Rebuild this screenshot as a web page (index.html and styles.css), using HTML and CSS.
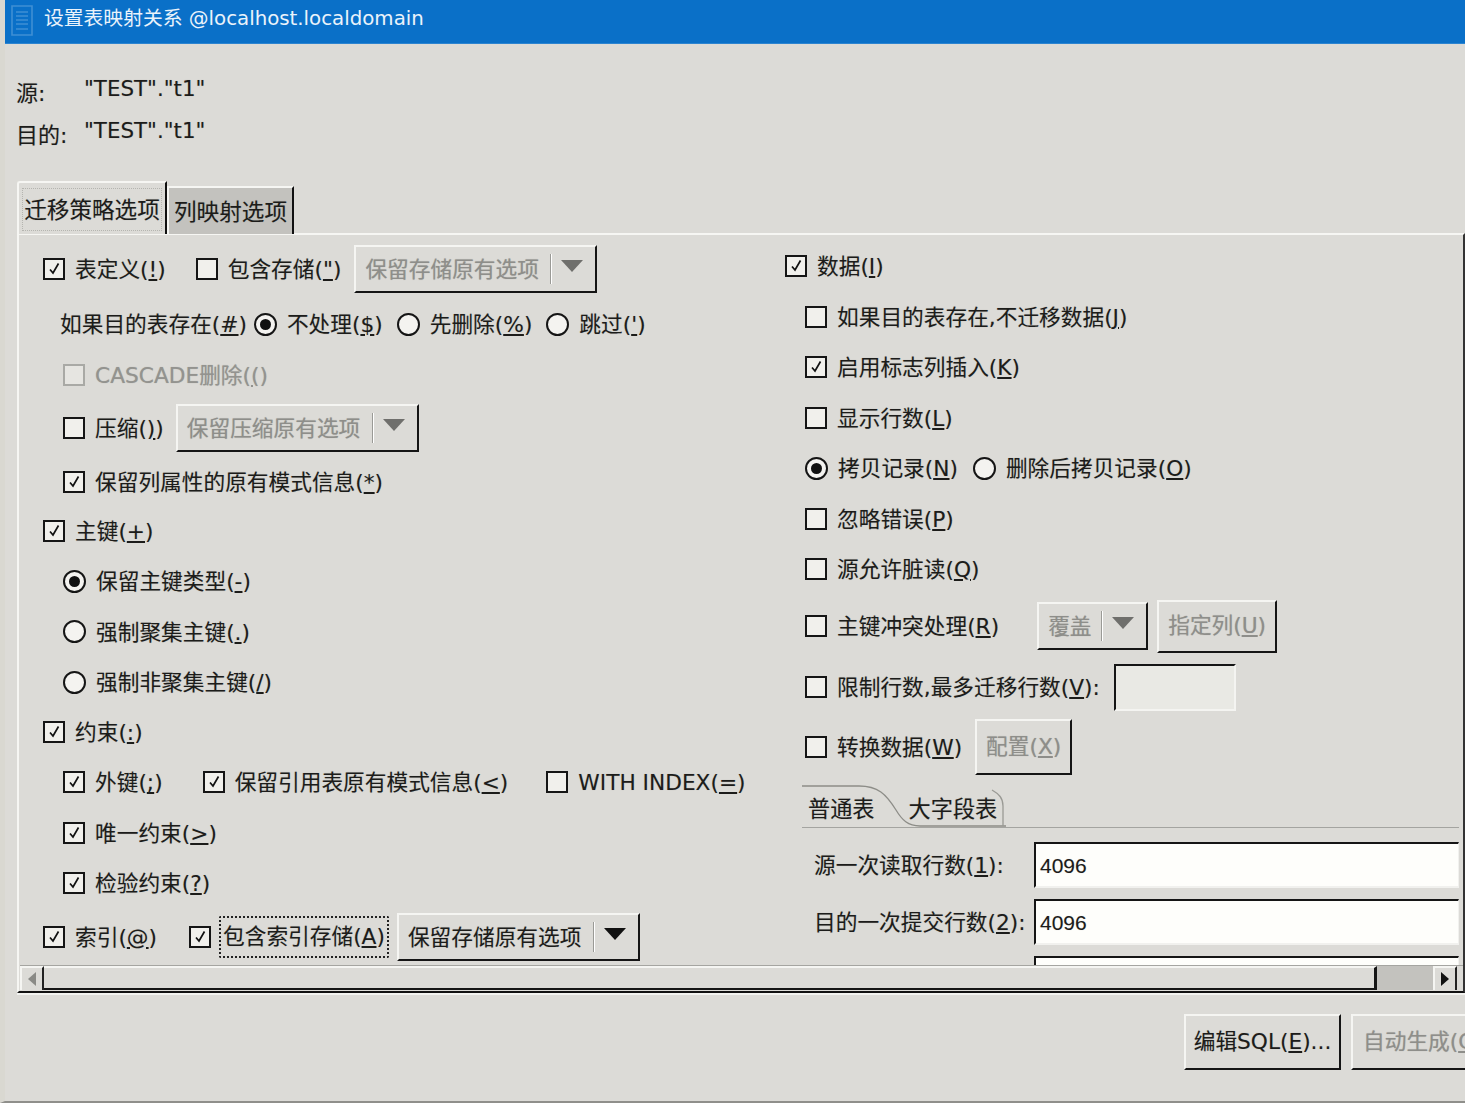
FILE: index.html
```html
<!DOCTYPE html>
<html lang="zh-CN">
<head>
<meta charset="utf-8">
<title>设置表映射关系</title>
<link rel="stylesheet" href="styles.css">
</head>
<body>
<svg class="defs" width="0" height="0" aria-hidden="true"><defs>
<symbol id="tick" viewBox="0 0 18 18"><path d="M5 9.5 L8 13 L13.5 3.5" fill="none" stroke="#111" stroke-width="1.7"/></symbol>
</defs></svg>
<div class="window">
  <header class="titlebar">
    <svg class="appicon" width="26" height="32" viewBox="0 0 26 32"><path d="M3 1H23V30H3Z M7 7H19 M7 11H19 M7 15H19 M7 19H19 M7 24H19" fill="none" stroke="#3f8fd4" stroke-width="1.6"/></svg>
    <span class="title">设置表映射关系 @localhost.localdomain</span>
  </header>
  <section class="info">
    <span class="info-label">源:</span><span class="info-value">"TEST"."t1"</span>
    <span class="info-label">目的:</span><span class="info-value">"TEST"."t1"</span>
  </section>
  <nav class="tabs">
    <div class="tab active"><span class="tab-focus">迁移策略选项</span></div>
    <div class="tab inactive">列映射选项</div>
  </nav>
  <main class="panel">
    <div class="columns">
      <div class="col left">
        <div class="row tall r1">
          <label class="opt"><i class="box on"><svg><use href="#tick"/></svg></i><span>表定义(<u>!</u>)</span></label>
          <label class="opt m30"><i class="box"></i><span>包含存储(<u>"</u>)</span></label>
          <div class="combo off m13 w242"><span class="combo-text">保留存储原有选项</span><i class="combo-sep"></i><i class="arrow"></i></div>
        </div>
        <div class="row ind-s g16">
          <span class="text">如果目的表存在(<u>#</u>)</span>
          <label class="opt"><i class="radio on"></i><span>不处理(<u>$</u>)</span></label>
          <label class="opt"><i class="radio"></i><span>先删除(<u>%</u>)</span></label>
          <label class="opt"><i class="radio"></i><span>跳过(<u>'</u>)</span></label>
        </div>
        <div class="row ind"><label class="opt off"><i class="box dis"></i><span>CASCADE删除(<u>(</u>)</span></label></div>
        <div class="row tall ind">
          <label class="opt"><i class="box"></i><span>压缩(<u>)</u>)</span></label>
          <div class="combo off m12 w242"><span class="combo-text">保留压缩原有选项</span><i class="combo-sep"></i><i class="arrow"></i></div>
        </div>
        <div class="row ind r5"><label class="opt"><i class="box on"><svg><use href="#tick"/></svg></i><span>保留列属性的原有模式信息(<u>*</u>)</span></label></div>
        <div class="row"><label class="opt"><i class="box on"><svg><use href="#tick"/></svg></i><span>主键(<u>+</u>)</span></label></div>
        <div class="row ind"><label class="opt"><i class="radio on"></i><span>保留主键类型(<u>-</u>)</span></label></div>
        <div class="row ind"><label class="opt"><i class="radio"></i><span>强制聚集主键(<u>.</u>)</span></label></div>
        <div class="row ind"><label class="opt"><i class="radio"></i><span>强制非聚集主键(<u>/</u>)</span></label></div>
        <div class="row r10"><label class="opt"><i class="box on"><svg><use href="#tick"/></svg></i><span>约束(<u>:</u>)</span></label></div>
        <div class="row ind">
          <label class="opt"><i class="box on"><svg><use href="#tick"/></svg></i><span>外键(<u>;</u>)</span></label>
          <label class="opt m40"><i class="box on"><svg><use href="#tick"/></svg></i><span>保留引用表原有模式信息(<u>&lt;</u>)</span></label>
          <label class="opt m38"><i class="box"></i><span>WITH INDEX(<u>=</u>)</span></label>
        </div>
        <div class="row ind"><label class="opt"><i class="box on"><svg><use href="#tick"/></svg></i><span>唯一约束(<u>&gt;</u>)</span></label></div>
        <div class="row ind"><label class="opt"><i class="box on"><svg><use href="#tick"/></svg></i><span>检验约束(<u>?</u>)</span></label></div>
        <div class="row tall">
          <label class="opt"><i class="box on"><svg><use href="#tick"/></svg></i><span>索引(<u>@</u>)</span></label>
          <i class="box on m32"><svg><use href="#tick"/></svg></i>
          <span class="focus-label">包含索引存储(<u>A</u>)</span>
          <div class="combo m8 w242"><span class="combo-text">保留存储原有选项</span><i class="combo-sep"></i><i class="arrow"></i></div>
        </div>
      </div>
      <div class="col right">
        <div class="row"><label class="opt"><i class="box on"><svg><use href="#tick"/></svg></i><span>数据(<u>I</u>)</span></label></div>
        <div class="row ind"><label class="opt"><i class="box"></i><span>如果目的表存在,不迁移数据(<u>J</u>)</span></label></div>
        <div class="row ind"><label class="opt"><i class="box on"><svg><use href="#tick"/></svg></i><span>启用标志列插入(<u>K</u>)</span></label></div>
        <div class="row ind"><label class="opt"><i class="box"></i><span>显示行数(<u>L</u>)</span></label></div>
        <div class="row ind">
          <label class="opt"><i class="radio on"></i><span>拷贝记录(<u>N</u>)</span></label>
          <label class="opt m15"><i class="radio"></i><span>删除后拷贝记录(<u>O</u>)</span></label>
        </div>
        <div class="row ind"><label class="opt"><i class="box"></i><span>忽略错误(<u>P</u>)</span></label></div>
        <div class="row ind"><label class="opt"><i class="box"></i><span>源允许脏读(<u>Q</u>)</span></label></div>
        <div class="row ind h44">
          <label class="opt"><i class="box"></i><span>主键冲突处理(<u>R</u>)</span></label>
          <div class="combo off m38 w112"><span class="combo-text">覆盖</span><i class="combo-sep"></i><i class="arrow"></i></div>
          <button class="btn off m9 btn-field">指定列(<u>U</u>)</button>
        </div>
        <div class="row ind h38">
          <label class="opt"><i class="box"></i><span>限制行数,最多迁移行数(<u>V</u>):</span></label>
          <span class="field-off"></span>
        </div>
        <div class="row ind h42">
          <label class="opt"><i class="box"></i><span>转换数据(<u>W</u>)</span></label>
          <button class="btn off m13 btn-conf">配置(<u>X</u>)</button>
        </div>
        <div class="subtabs">
          <svg class="subtab-curve" width="204" height="44" viewBox="0 0 204 44"><path d="M0 2H57C76 2 84 10 94 26C100 36 106 42 118 42H204" fill="none" stroke="#8d8d88" stroke-width="1.3"/><path d="M190 6C197 10 201 14 201 22V42" fill="none" stroke="#9a9a95" stroke-width="1.3"/></svg>
          <span class="subtab first">普通表</span>
          <span class="subtab second">大字段表</span>
        </div>
        <div class="form">
          <label class="form-label">源一次读取行数(<u>1</u>):</label><span class="field">4096</span>
          <label class="form-label">目的一次提交行数(<u>2</u>):</label><span class="field">4096</span>
          <span></span><span class="field clipped"></span>
        </div>
      </div>
    </div>
    <div class="scrollbar">
      <span class="sb-btn"><i class="tri-l"></i></span>
      <span class="sb-thumb"></span>
      <span class="sb-trough"></span>
      <span class="sb-btn end"><i class="tri-r"></i></span>
    </div>
  </main>
  <footer class="footer">
    <button class="btn foot">编辑SQL(<u>E</u>)...</button>
    <button class="btn foot off">自动生成(<u>C</u>)</button>
  </footer>
</div>
</body>
</html>
```
FILE: styles.css
```css
* { box-sizing: border-box; }
html, body { margin: 0; height: 100%; }
body {
  width: 1465px; height: 1103px; overflow: hidden;
  background: #dcdbd7; color: #1c1c1a;
  font: 21.7px/30px "DejaVu Sans", "Noto Sans CJK SC", sans-serif;
  text-shadow: 0 0 1px rgba(0, 0, 0, .22);
}
.defs { position: absolute; }
.window {
  width: 1465px; height: 1103px; display: flex; flex-direction: column;
  border-bottom: 2px solid #8f8f8b; border-left: 5px solid #d9d8d1; overflow: hidden;
}
u { text-underline-offset: 2px; }
i { font-style: normal; }

.titlebar {
  height: 44px; margin-left: -5px; flex: none; display: flex; align-items: center; gap: 9px;
  padding: 0 0 6px 9px; color: #eaf3fb; font-size: 19.8px; text-shadow: none;
  background: #0a70c8; border-bottom: 1px solid #2c84d0;
}
.appicon { flex: none; margin-top: 5px; }

.info {
  flex: none; height: 138px; padding: 24px 0 0 11px;
  display: grid; grid-template-columns: 68px 1fr; grid-auto-rows: 42px; align-items: center;
}
.info-label { position: relative; top: 5px; font-size: 22px; }
.info-value { font-size: 21.4px; }

.tabs { flex: none; height: 52px; margin-left: 12px; display: flex; align-items: flex-end; position: relative; z-index: 1; margin-bottom: -1px; }
.tab { font-size: 22.6px; display: flex; align-items: center; justify-content: center; padding-top: 2px; }
.tab.active {
  width: 150px; height: 53px; padding: 5px 3px 3px; background: #dcdbd7;
  border-top: 2px solid #f6f6f3; border-left: 2px solid #f6f6f3; border-right: 2px solid #111; border-radius: 3px 0 0 0;
}
.tab-focus { width: 100%; height: 100%; display: flex; align-items: center; justify-content: center; border: 1px dotted #b5b5b0; white-space: nowrap; }
.tab.inactive {
  width: 127px; height: 48px; background: #c3c2be;
  border-top: 2px solid #f6f6f3; border-left: 2px solid #f6f6f3; border-right: 2px solid #111;
}

.panel {
  flex: none; height: 760px; margin-left: 12px; display: flex; flex-direction: column;
  border-top: 2px solid #f6f6f3; border-left: 2px solid #f6f6f3; border-right: 2px solid #333;
  border-bottom: 2px solid #111; box-shadow: 0 2px 0 #f2f2ef;
}
.columns { flex: none; height: 730px; display: grid; grid-template-columns: 766px 1fr; overflow: hidden; }
.col { display: flex; flex-direction: column; gap: 20px; min-width: 0; }
.col.left { padding: 16px 0 0 24px; }
.col.right { padding: 16px 4px 0 0; }

.row { flex: none; height: 30.5px; display: flex; align-items: center; white-space: nowrap; }
.row.tall { height: 36px; }
.r1 { margin-bottom: 2px; }
.r5 { margin-top: 1px; margin-bottom: -2px; }
.r10 { margin-top: -1px; }
.row.h44 { height: 43.5px; }
.row.h38 { height: 38.5px; }
.row.h42 { height: 41.5px; }
.ind { margin-left: 20px; }
.ind-s { margin-left: 17px; }
.g16 { gap: 14px; }

.opt { display: inline-flex; align-items: center; gap: 10px; }
.opt > span { position: relative; top: 1px; }
.opt.off { color: #93938f; }
.text { display: inline-block; position: relative; top: 1px; margin-right: -7px; }
.m8 { margin-left: 8px; }
.m9 { margin-left: 9px; }
.m12 { margin-left: 12px; }
.m13 { margin-left: 13px; }
.m15 { margin-left: 15px; }
.m30 { margin-left: 30px; }
.m32 { margin-left: 32px; }
.m38 { margin-left: 38px; }
.m40 { margin-left: 40px; }

.box { flex: none; width: 22px; height: 22px; background: #f1f0ec; border: 2px solid #151515; display: block; }
.box svg { display: block; width: 18px; height: 18px; }
.box.dis { border-color: #a9a9a5; background: #e6e5e1; }
.radio { flex: none; width: 23px; height: 23px; border-radius: 50%; border: 2px solid #151515; background: #f4f3f0; position: relative; display: block; }
.radio.on::after { content: ""; position: absolute; inset: 4px; border-radius: 50%; background: #111; }

.combo {
  flex: none; height: 48px; display: flex; align-items: center; padding: 0 9px;
  background: #dcdbd7; border-top: 2px solid #f5f5f2; border-left: 2px solid #f5f5f2;
  border-right: 2px solid #151515; border-bottom: 2px solid #151515;
}
.w242 { width: 243px; }
.w112 { width: 111px; }
.combo-text { flex: 1; position: relative; top: 1px; }
.combo-sep { width: 2px; height: 30px; background: #9a9a96; border-right: 1px solid #fff; margin: 0 9px 0 6px; }
.arrow { width: 0; height: 0; margin-right: 3px; margin-bottom: 6px; border-left: 11px solid transparent; border-right: 11px solid transparent; border-top: 12px solid #111; }
.combo.off { color: #8e8e8a; }
.combo.off .arrow { border-top-color: #6f6f6c; }

.focus-label { margin-left: 8px; padding: 0 2px; height: 42px; line-height: 38px; border: 2px dotted #222; border-radius: 2px; }

.btn {
  font: inherit; color: inherit; padding: 0; text-shadow: inherit;
  background: #dcdbd7; border-top: 2px solid #f5f5f2; border-left: 2px solid #f5f5f2;
  border-right: 2px solid #151515; border-bottom: 2px solid #151515;
}
.btn.off { color: #8e8e8a; }
.btn-field { width: 120px; height: 53px; }
.btn-conf { width: 97px; height: 56px; }

.field-off {
  width: 122px; height: 47px; margin-left: 14px;
  background: #e9e9e4; border-top: 2px solid #151515; border-left: 2px solid #151515; border-right: 2px solid #f4f4f1; border-bottom: 2px solid #f4f4f1;
}

.subtabs { flex: none; position: relative; height: 44px; margin: -4px 0 0 17px; display: flex; align-items: center; border-bottom: 1px solid #a4a4a0; }
.subtab-curve { position: absolute; left: 0; top: 0; }
.subtab { position: relative; top: 3px; font-size: 22.2px; }
.subtab.first { margin-left: 6px; }
.subtab.second { margin-left: 34px; }

.form { flex: none; margin: -6px 0 0 29px; display: grid; grid-template-columns: 220px 1fr; column-gap: 0; grid-auto-rows: 46px; row-gap: 11px; align-items: center; }
.form-label { white-space: nowrap; position: relative; top: 1px; }
.field {
  height: 46px; padding-left: 4px; line-height: 44px; font-family: "Liberation Sans", sans-serif; font-size: 21px;
  background: #fefefb; border-top: 2px solid #151515; border-left: 2px solid #151515; border-right: 1px solid #f1f1ee; border-bottom: 2px solid #f1f1ee;
}

.scrollbar { flex: none; height: 26px; margin-left: 1px; display: flex; border-top: 1px solid #a5a5a1; padding-right: 6px; }
.sb-btn { flex: none; width: 24px; height: 24px; display: flex; align-items: center; justify-content: center; border-top: 2px solid #f5f5f2; border-left: 2px solid #f5f5f2; border-right: 2px solid #222; }
.sb-btn.end { width: 24px; }
.sb-thumb { flex: none; width: 1333px; height: 24px; border-top: 2px solid #f5f5f2; border-right: 3px solid #151515; border-bottom: 2px solid #151515; }
.sb-trough { flex: 1; height: 24px; background: #c3c2be; }
.tri-l { border-top: 7px solid transparent; border-bottom: 7px solid transparent; border-right: 8px solid #8a8a86; }
.tri-r { border-top: 7px solid transparent; border-bottom: 7px solid transparent; border-left: 8px solid #111; }

.footer { flex: 1; min-height: 0; display: flex; align-items: flex-start; gap: 10px; padding: 21px 0 0 1179px; }
.btn.foot { flex: none; width: 157px; height: 56px; white-space: nowrap; }
.btn.foot.off { width: 150px; text-align: left; padding-left: 10px; }
```
